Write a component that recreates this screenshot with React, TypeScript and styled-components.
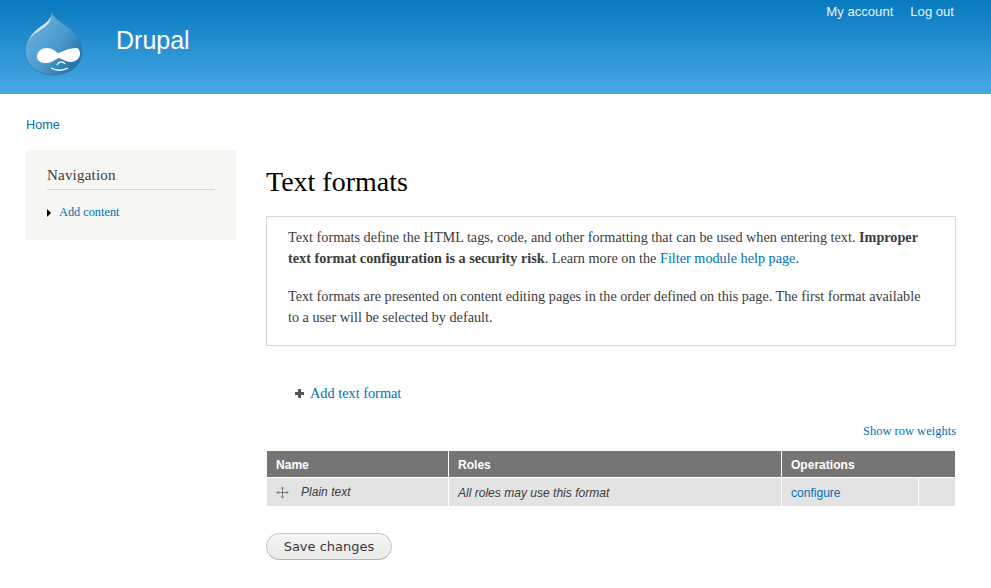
import { createGlobalStyle } from "styled-components";
import styled from "styled-components";

const GlobalStyle = createGlobalStyle`
  html, body {
    margin: 0;
    padding: 0;
    background: #fff;
    height: 100%;
    overflow: hidden;
  }
  body {
    font-family: "Liberation Serif", serif;
    font-size: 14px;
    line-height: 21px;
    color: #3b3b3b;
  }
`;

const Header = styled.header`
  height: 94px;
  display: flex;
  justify-content: space-between;
  align-items: flex-start;
  background: linear-gradient(to bottom, #0779bf 0%, #48a9e4 100%);
  font-family: "Liberation Sans", sans-serif;
`;

const Brand = styled.div`
  display: flex;
  align-items: flex-start;
  padding: 10px 0 0 24px;
`;

const SiteName = styled.div`
  margin: 13px 0 0 32px;
  font-size: 25px;
  line-height: 34px;
  color: #fffeff;
`;

const SecondaryMenu = styled.nav`
  display: flex;
  gap: 17px;
  padding: 3px 37px 0 0;
  font-size: 13.1px;
  line-height: 18px;
  color: #e8f2f9;
`;

const Breadcrumb = styled.div`
  padding: 23px 0 0 26px;
  height: 33px;
  font-family: "Liberation Sans", sans-serif;
  font-size: 12.7px;
  line-height: 17px;
  color: #0071b3;
`;

const Columns = styled.div`
  display: flex;
  align-items: flex-start;
  padding: 0 35px 0 26px;
  gap: 30px;
`;

const Sidebar = styled.aside`
  box-sizing: border-box;
  width: 210px;
  height: 90px;
  flex: none;
  padding: 15px 21px 0;
  background: #f6f6f2;
  border: 1px solid #f4f4f0;
  border-width: 0 0 1px;
`;

const BlockTitle = styled.h2`
  margin: 0;
  padding-bottom: 3px;
  border-bottom: 1px solid #d6d6d6;
  font-size: 15px;
  font-weight: 400;
  line-height: 21px;
  letter-spacing: 0.2px;
  color: #3b3b3b;
`;

const MenuItem = styled.div`
  display: flex;
  align-items: center;
  margin-top: 12px;
  font-size: 12.3px;
  line-height: 21px;
  color: #0071b3;
`;

const MenuArrow = styled.span`
  width: 0;
  height: 0;
  margin-right: 8px;
  border-style: solid;
  border-width: 4px 0 4px 4px;
  border-color: transparent transparent transparent #000;
`;

const Main = styled.main`
  flex: 1;
  min-width: 0;
`;

const Title = styled.h1`
  margin: 14px 0 0;
  font-size: 28px;
  font-weight: 400;
  line-height: 36px;
  color: #000;
`;

const Help = styled.div`
  box-sizing: border-box;
  height: 130px;
  margin-top: 16px;
  padding: 10px 21px 0;
  border: 1px solid #d3d7d9;
`;

const HelpText = styled.p`
  margin: 0 0 17px;
  font-size: 14.23px;
  line-height: 21px;
`;

const Link = styled.a`
  color: #0071b3;
  text-decoration: none;
`;

const ActionRow = styled.div`
  display: flex;
  align-items: center;
  gap: 6px;
  margin-top: 37px;
  padding-left: 29px;
  font-size: 14.3px;
  line-height: 21px;
`;

const PlusIcon = styled.svg`
  width: 9px;
  height: 9px;
  fill: #555;
  flex: none;
`;

const WeightsRow = styled.div`
  margin-top: 17px;
  text-align: right;
  font-size: 12.5px;
  line-height: 21px;
`;

const Table = styled.div`
  margin: 9px 1px 0 1px;
  font-family: "Liberation Sans", sans-serif;
  font-size: 12.05px;
`;

const Row = styled.div<{ $head?: boolean }>`
  display: grid;
  grid-template-columns: 181px 332px 1fr;
  column-gap: 1px;
  height: ${(p) => (p.$head ? "26px" : "28px")};
  margin-bottom: ${(p) => (p.$head ? "1px" : "0")};
  background: ${(p) => (p.$head ? "#757575" : "#fff")};
`;

const HeadCell = styled.div`
  display: flex;
  align-items: center;
  padding: 3px 0 0 9px;
  background: #757575;
  color: #fff;
  font-weight: 700;
  box-shadow: 1px 0 0 #fff;
  &:last-child {
    box-shadow: none;
  }
`;

const Cell = styled.div`
  display: flex;
  align-items: center;
  padding: 2px 0 0 9px;
  background: #e3e3e3;
  font-style: italic;
  color: #3b3b3b;
`;

const FormatName = styled.span`
  margin: 0 0 2px 12px;
`;

const OperationsCell = styled.div`
  display: grid;
  grid-template-columns: 136px 1fr;
  column-gap: 1px;
`;

const OperationLink = styled(Link)`
  display: flex;
  align-items: center;
  padding: 2px 0 0 9px;
  background: #e3e3e3;
`;

const EmptyCell = styled.div`
  background: #e3e3e3;
`;

const DragHandle = styled.svg`
  width: 13px;
  height: 13px;
  margin-top: -2px;
  stroke: #7a7a7a;
  fill: none;
  flex: none;
`;

const SaveButton = styled.button`
  display: block;
  box-sizing: border-box;
  width: 126px;
  height: 27px;
  margin-top: 27px;
  padding: 0 0 1px;
  border: 1px solid #c8c8c8;
  border-bottom-color: #b4b4b4;
  border-radius: 14px;
  background: linear-gradient(to bottom, #f6f6f5 0%, #e9e9e7 100%);
  font-family: "DejaVu Sans", sans-serif;
  font-size: 13px;
  color: #3a3a3a;
`;

const DrupalLogo = () => (
  <svg width="60" height="66" viewBox="0 0 60 66">
    <defs>
      <linearGradient id="drop" x1="0" y1="0" x2="1" y2="0.8">
        <stop offset="0" stopColor="#74b8e2" />
        <stop offset="0.6" stopColor="#4a9acd" />
        <stop offset="1" stopColor="#1f6f9f" />
      </linearGradient>
    </defs>
    <path
      d="M28 1c1 6 6 9 12 13 9 6 18 15 18 28 0 13-12 23-29 23C13 65 1 55 1 41 1 27 12 20 20 14c4-3 7-7 8-13z"
      fill="url(#drop)"
      stroke="#2a78a8"
      strokeWidth="0.7"
    />
    <path d="M27 6c-1 4-6 8-11 11-5 4-9 8-11 12 5-6 13-9 18-14 3-3 4-6 4-9z" fill="#e2f1fa" opacity="0.85" />
    <path
      d="M13 47c0-6 5-9 10-9 5 0 8 3 11 5 4-1 10-5 18-5 3 0 4 3 4 6 0 4-4 8-9 8-5 0-8-3-12-4-4 1-7 5-12 5-6 0-10-2-10-6z"
      fill="#fff"
    />
    <path d="M33 55c2-4 6-4 8-1" stroke="#fff" strokeWidth="1.3" fill="none" />
    <path d="M27 58c5 3 12 3 17 0" stroke="#fff" strokeWidth="1.3" fill="none" />
  </svg>
);

export default function App() {
  return (
    <>
      <GlobalStyle />
      <Header>
        <Brand>
          <DrupalLogo />
          <SiteName>Drupal</SiteName>
        </Brand>
        <SecondaryMenu>
          <span>My account</span>
          <span>Log out</span>
        </SecondaryMenu>
      </Header>
      <Breadcrumb>Home</Breadcrumb>
      <Columns>
        <Sidebar>
          <BlockTitle>Navigation</BlockTitle>
          <MenuItem>
            <MenuArrow />
            Add content
          </MenuItem>
        </Sidebar>
        <Main>
          <Title>Text formats</Title>
          <Help>
            <HelpText>
              Text formats define the HTML tags, code, and other formatting that can be used when entering text.{" "}
              <strong>Improper text format configuration is a security risk</strong>. Learn more on the{" "}
              <Link>Filter module help page</Link>.
            </HelpText>
            <HelpText>
              Text formats are presented on content editing pages in the order defined on this page. The first format
              available to a user will be selected by default.
            </HelpText>
          </Help>
          <ActionRow>
            <PlusIcon viewBox="0 0 9 9">
              <path d="M3 0h3v3h3v3H6v3H3V6H0V3h3z" />
            </PlusIcon>
            <Link>Add text format</Link>
          </ActionRow>
          <WeightsRow>
            <Link>Show row weights</Link>
          </WeightsRow>
          <Table>
            <Row $head>
              <HeadCell>Name</HeadCell>
              <HeadCell>Roles</HeadCell>
              <HeadCell>Operations</HeadCell>
            </Row>
            <Row>
              <Cell>
                <DragHandle viewBox="0 0 13 13">
                  <path d="M6.5 1v11M1 6.5h11M5 2.5l1.500-1.500L8 2.500M5 10.500L6.500 12 8 10.500M2.500 5L1 6.500 2.500 8M10.500 5L12 6.500 10.500 8" />
                </DragHandle>
                <FormatName>Plain text</FormatName>
              </Cell>
              <Cell>All roles may use this format</Cell>
              <OperationsCell>
                <OperationLink>configure</OperationLink>
                <EmptyCell />
              </OperationsCell>
            </Row>
          </Table>
          <SaveButton>Save changes</SaveButton>
        </Main>
      </Columns>
    </>
  );
}
